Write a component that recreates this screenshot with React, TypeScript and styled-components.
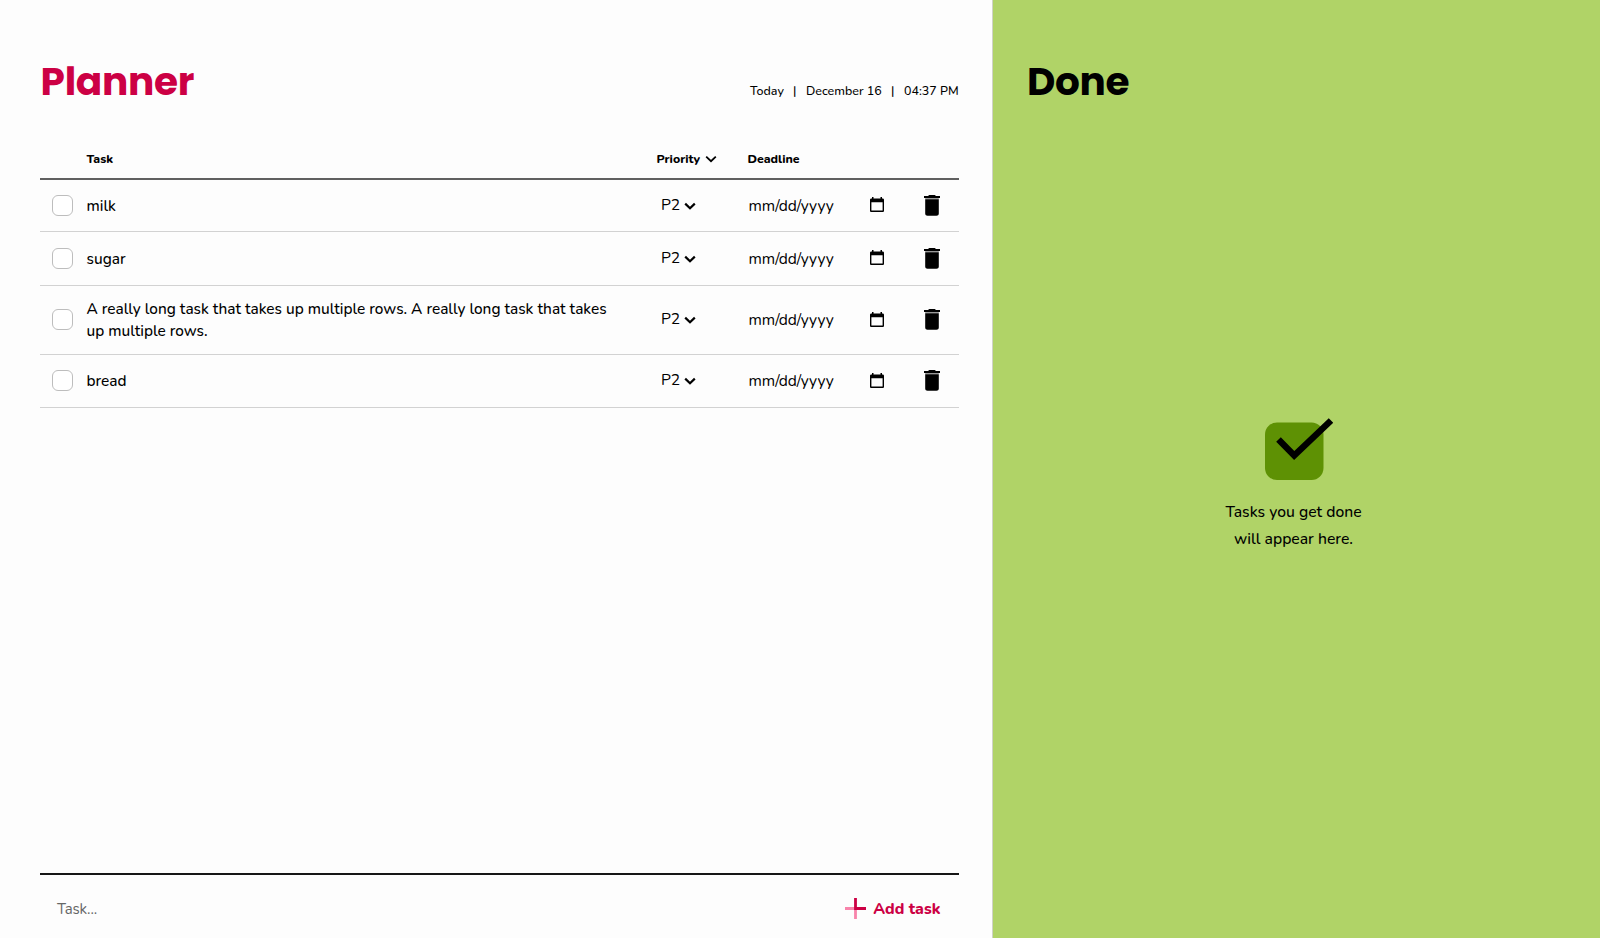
import React from "react";
import styled, { createGlobalStyle } from "styled-components";

const GlobalStyle = createGlobalStyle`
  *, *::before, *::after { box-sizing: border-box; }
  body { margin: 0; background: #fdfdfd; color: #000; font-family: Nunito, Lato, sans-serif; }
`;

const Page = styled.div`
  display: grid;
  grid-template-columns: 992px 1fr;
  height: 938px;
  overflow: hidden;
`;

const PlannerPanel = styled.main`
  display: flex;
  flex-direction: column;
  padding: 55px 33.5px 0 40px;
`;

const DonePanel = styled.aside`
  display: flex;
  flex-direction: column;
  padding: 55px 0 0 34px;
  background: #b0d367;
  border-left: 1px solid #cfd3c6;
`;

const Header = styled.header`
  display: flex;
  justify-content: space-between;
  height: 81px;
`;

const Title = styled.h1<{ $accent?: boolean }>`
  margin: 0;
  padding-left: ${(p) => (p.$accent ? 0.6 : 0)}px;
  font: 700 39px/54px Poppins, Inter, sans-serif;
  letter-spacing: -0.3px;
  color: ${(p) => (p.$accent ? "#cc0044" : "#000")};
`;

const DateLine = styled.div`
  display: flex;
  justify-content: flex-end;
  padding-top: 25px;
  font-size: 12.45px;
  line-height: 21px;
  font-weight: 500;
  white-space: nowrap;
`;

const DatePart = styled.span<{ $width: number }>`
  width: ${(p) => p.$width}px;
`;

const ColumnHeads = styled.div`
  display: grid;
  grid-template-columns: 46.5px 570px 91px 1fr;
  align-items: center;
  height: 44px;
  padding-top: 4px;
  border-bottom: 2px solid #606060;
  font-size: 12.3px;
  font-weight: 800;
`;

const ColumnHead = styled.div`
  display: flex;
  align-items: center;
`;

const TaskRow = styled.div<{ $height: number }>`
  display: grid;
  grid-template-columns: 46.5px 574.5px 87.5px 121.5px 54px 1fr;
  align-items: center;
  height: ${(p) => p.$height}px;
  padding-bottom: 1px;
  border-bottom: 1px solid #d2d2d2;
  font-size: 15.6px;
  line-height: 22px;
`;

const Checkbox = styled.button`
  width: 21px;
  height: 21px;
  margin-left: 12px;
  padding: 0;
  border: 1.5px solid #bdbdbd;
  border-radius: 6px;
  background: #fff;
`;

const TaskName = styled.div`
  width: 532px;
  padding-top: 1px;
  font-size: 15.4px;
  font-weight: 500;
`;

const Priority = styled.div`
  display: flex;
  align-items: center;
  padding-bottom: 1px;
  letter-spacing: -0.2px;
`;

const Deadline = styled.div`
  padding-top: 1px;
`;

const IconSlot = styled.span<{ $left?: number; $top?: number; $bottom?: number }>`
  display: flex;
  margin-left: ${(p) => p.$left ?? 0}px;
  padding-top: ${(p) => p.$top ?? 0}px;
  padding-bottom: ${(p) => p.$bottom ?? 0}px;
`;

const Composer = styled.footer`
  display: flex;
  align-items: center;
  justify-content: space-between;
  width: 919px;
  height: 65px;
  margin-top: auto;
  padding: 4px 18.5px 0 17px;
  border-top: 2px solid #161616;
`;

const Placeholder = styled.span`
  font-size: 15px;
  letter-spacing: -0.15px;
  color: #666;
`;

const AddButton = styled.button`
  display: flex;
  align-items: center;
  gap: 7px;
  padding: 0;
  border: 0;
  background: none;
  color: #cc0044;
  font: 800 15.8px/24px Nunito, Lato, sans-serif;
`;

const EmptyState = styled.div`
  display: flex;
  flex-direction: column;
  align-items: center;
  width: 533px;
  padding-top: 309px;
  font-size: 15.7px;
  font-weight: 500;
  line-height: 27px;
`;

const EmptyIcon = styled.svg`
  display: block;
  margin: 0 0 18px 11px;
`;

const Chevron = ({ weight }: { weight: number }) => (
  <svg width="12" height="8" viewBox="0 0 12 8" fill="none" stroke="#000" strokeWidth={weight}>
    <path d="M1.200 1.600 6 6.200l4.800-4.600" />
  </svg>
);

const CalendarIcon = () => (
  <svg width="14" height="15" viewBox="0 0 14 15">
    <path fillRule="evenodd" d="M2 0h1.500v1.500h7V0H12v1.500h.7c.7 0 1.300.6 1.300 1.300v10.900c0 .7-.6 1.300-1.300 1.300H1.300C.6 15 0 14.400 0 13.700V2.800c0-.7.6-1.300 1.300-1.300H2zM1.400 5.300v8.300h11.200V5.300z" />
  </svg>
);

const TrashIcon = () => (
  <svg width="16" height="21" viewBox="0 0 16 21">
    <path fill="#999" d="M1.200 3h13.600v1.300H1.200z" />
    <path d="M0 1h4l1.200-1h5.600L12 1h4v2H0zM1.200 4.200h13.600v14.300c0 1.300-1 2.300-2.300 2.300h-9c-1.300 0-2.300-1-2.300-2.300z" />
  </svg>
);

const PlusIcon = () => (
  <svg width="21" height="21" viewBox="0 0 21 21" fill="none" strokeWidth="2.800">
    <path d="M0 10.500h10.500V21" stroke="#f884ab" />
    <path d="M10.500 0v10.500H21" stroke="#cc0044" />
  </svg>
);

const tasks = [
  { name: "milk", height: 52 },
  { name: "sugar", height: 54 },
  { name: "A really long task that takes up multiple rows. A really long task that takes up multiple rows.", height: 69 },
  { name: "bread", height: 53 },
];

export default function App() {
  return (
    <Page>
      <GlobalStyle />
      <PlannerPanel>
        <Header>
          <Title $accent>Planner</Title>
          <DateLine>
            <DatePart $width={43}>Today</DatePart>
            <DatePart $width={13}>|</DatePart>
            <DatePart $width={85}>December 16</DatePart>
            <DatePart $width={13}>|</DatePart>
            <DatePart $width={54.5}>04:37 PM</DatePart>
          </DateLine>
        </Header>
        <ColumnHeads>
          <span />
          <ColumnHead>Task</ColumnHead>
          <ColumnHead>
            Priority
            <IconSlot $left={4.5}><Chevron weight={1.8} /></IconSlot>
          </ColumnHead>
          <ColumnHead>Deadline</ColumnHead>
        </ColumnHeads>
        {tasks.map((task) => (
          <TaskRow key={task.name} $height={task.height}>
            <Checkbox aria-label={task.name} />
            <TaskName>{task.name}</TaskName>
            <Priority>
              P2
              <IconSlot $left={4.5} $top={2}><Chevron weight={2.2} /></IconSlot>
            </Priority>
            <Deadline>mm/dd/yyyy</Deadline>
            <IconSlot $bottom={1}><CalendarIcon /></IconSlot>
            <TrashIcon />
          </TaskRow>
        ))}
        <Composer>
          <Placeholder>Task...</Placeholder>
          <AddButton>
            <PlusIcon />
            Add task
          </AddButton>
        </Composer>
      </PlannerPanel>
      <DonePanel>
        <Title>Done</Title>
        <EmptyState>
          <EmptyIcon width="68" height="63" viewBox="0 0 68 63">
            <rect x="0" y="4.500" width="58.500" height="57.500" rx="12" fill="#5e9104" />
            <path d="M13.500 21.500 29.200 37.500 66 2.500" fill="none" stroke="#000" strokeWidth="6.500" />
          </EmptyIcon>
          <div>Tasks you get done</div>
          <div>will appear here.</div>
        </EmptyState>
      </DonePanel>
    </Page>
  );
}
